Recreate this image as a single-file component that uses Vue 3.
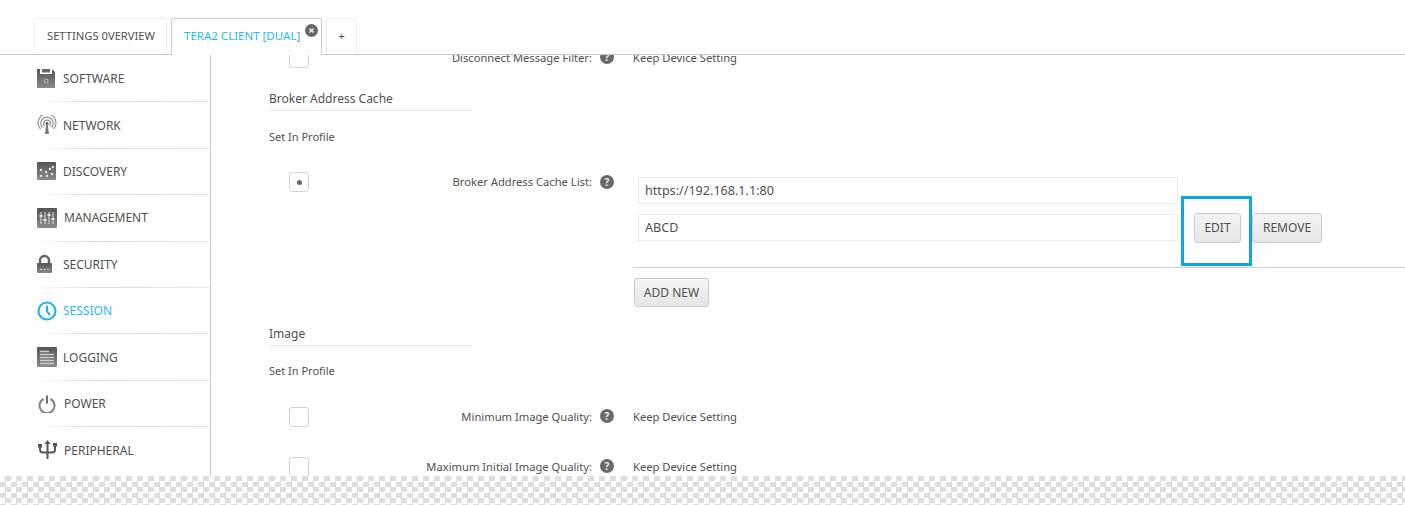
<template>
  <div class="page">
    <div class="tabs">
      <div class="tab tab-first">SETTINGS 0VERVIEW</div>
      <div class="tab tab-active">
        TERA2 CLIENT [DUAL]
        <span class="tab-close">
          <svg viewBox="0 0 13 13" width="13" height="13">
            <circle cx="6.500" cy="6.500" r="6.500" fill="#666" />
            <path d="M4.500 4.500l4 4M8.500 4.500l-4 4" stroke="#e8e8e8" stroke-width="1.700" />
          </svg>
        </span>
      </div>
      <div class="tab tab-plus">+</div>
    </div>

    <div class="main">
      <nav class="sidebar">
        <div
          v-for="item in menu"
          :key="item.name"
          class="menu-item"
          :class="{ current: item.name === 'SESSION', shifted: item.shifted }"
        >
          <svg class="menu-icon" viewBox="0 0 20 20" width="20" height="20">
            <defs>
              <linearGradient :id="'grey-' + item.name" x1="0" y1="0" x2="0" y2="1">
                <stop offset="0" stop-color="#555" />
                <stop offset="1" stop-color="#8a8a8a" />
              </linearGradient>
            </defs>
            <template v-if="item.name === 'SOFTWARE'">
              <path d="M0 0h3v5h12V0l3 3v16H0z" :fill="'url(#grey-' + item.name + ')'" />
              <rect x="5" y="0" width="8" height="3.500" fill="#666" />
              <circle cx="9" cy="12" r="2" fill="none" stroke="#bbb" />
            </template>
            <template v-else-if="item.name === 'NETWORK'">
              <g fill="none" stroke="#999" stroke-width="1.300">
                <path d="M3.500 14a9 9 0 1 1 13 0" />
                <path d="M5.500 12.500a6.200 6.200 0 1 1 9 0" />
                <path d="M7.600 11a3.400 3.400 0 1 1 4.800 0" />
              </g>
              <circle cx="10" cy="8.500" r="1.600" fill="#666" />
              <path d="M9.400 9h1.200l1.400 10H8z" fill="#777" />
            </template>
            <template v-else-if="item.name === 'DISCOVERY'">
              <rect x="0" y="1" width="19" height="18" rx="1" :fill="'url(#grey-' + item.name + ')'" />
              <g fill="#ddd">
                <circle cx="4" cy="9" r="1.300" />
                <circle cx="9" cy="11" r="1.300" />
                <circle cx="4" cy="15" r="1.300" />
                <circle cx="13" cy="8" r="1.300" />
                <circle cx="16" cy="6" r="1.300" />
                <circle cx="10" cy="15" r="1.300" />
                <circle cx="15" cy="13" r="1.300" />
              </g>
            </template>
            <template v-else-if="item.name === 'MANAGEMENT'">
              <rect x="0" y="0" width="20" height="20" rx="1" :fill="'url(#grey-' + item.name + ')'" />
              <g stroke="#e4e4e4" stroke-width="1">
                <path d="M4 4v12M8 4v12M12 4v12M16 4v12" />
                <path d="M2.500 8h3M6.500 12h3M10.500 7h3M14.500 11h3" stroke-width="2" />
              </g>
            </template>
            <template v-else-if="item.name === 'SECURITY'">
              <path d="M3 9V6.500a4.500 4.500 0 0 1 9 0V9" fill="none" stroke="#666" stroke-width="2.400" />
              <rect x="0" y="9" width="15" height="10" rx="1" :fill="'url(#grey-' + item.name + ')'" />
              <path d="M3 15.500h2M6.500 15.500h2M10 15.500h2" stroke="#ddd" />
            </template>
            <template v-else-if="item.name === 'SESSION'">
              <circle cx="10" cy="10" r="8.500" fill="none" stroke="#27b5e8" stroke-width="2.200" />
              <path d="M10 4.500V10.500L13 14" fill="none" stroke="#27b5e8" stroke-width="2" />
            </template>
            <template v-else-if="item.name === 'LOGGING'">
              <rect x="0" y="0" width="20" height="20" rx="1" :fill="'url(#grey-' + item.name + ')'" />
              <path d="M3 4.500h9M3 7.500h14M3 10.500h14M3 13.500h14M3 16.500h14" stroke="#ccc" stroke-width="1.300" />
            </template>
            <template v-else-if="item.name === 'POWER'">
              <path d="M6.500 6a7.500 7.500 0 1 0 7 0" fill="none" stroke="#808080" stroke-width="2" />
              <path d="M10 2.500v8" stroke="#707070" stroke-width="2" />
            </template>
            <template v-else>
              <path d="M10.500 0l3 4h-2v15h-2V4h-2z" fill="#555" />
              <path d="M3 7v2.500q0 3 3 3h4.500M18 6v3.500q0 3-3 3h-4.500" fill="none" stroke="#555" stroke-width="2" />
              <rect x="1" y="4" width="4" height="3.500" fill="#555" />
              <rect x="16" y="3" width="4" height="3.500" fill="#555" />
            </template>
          </svg>
          <span>{{ item.name }}</span>
        </div>
      </nav>

      <section class="content">
        <div class="row row-clipped">
          <span class="check"></span>
          <span class="label">Disconnect Message Filter:</span>
          <span class="help">?</span>
          <span class="value">Keep Device Setting</span>
        </div>

        <h3 class="heading heading-broker">Broker Address Cache</h3>
        <p class="profile profile-broker">Set In Profile</p>

        <div class="row row-list">
          <span class="check"><i class="dot"></i></span>
          <span class="label">Broker Address Cache List:</span>
          <span class="help">?</span>
          <div class="cache-list">
            <div class="cache-line">
              <div class="field">https://192.168.1.1:80</div>
            </div>
            <div class="cache-line">
              <div class="field">ABCD</div>
              <button class="btn btn-edit">EDIT</button>
              <button class="btn btn-remove">REMOVE</button>
            </div>
            <div class="cache-foot">
              <button class="btn btn-add">ADD NEW</button>
            </div>
            <div class="highlight"></div>
          </div>
        </div>

        <h3 class="heading heading-image">Image</h3>
        <p class="profile">Set In Profile</p>

        <div class="row row-min">
          <span class="check"></span>
          <span class="label">Minimum Image Quality:</span>
          <span class="help">?</span>
          <span class="value">Keep Device Setting</span>
        </div>
        <div class="row row-max">
          <span class="check"></span>
          <span class="label">Maximum Initial Image Quality:</span>
          <span class="help">?</span>
          <span class="value">Keep Device Setting</span>
        </div>
      </section>
    </div>

    <div class="checker"></div>
  </div>
</template>

<script setup>
const menu = [
  { name: "SOFTWARE" },
  { name: "NETWORK" },
  { name: "DISCOVERY" },
  { name: "MANAGEMENT", shifted: true },
  { name: "SECURITY" },
  { name: "SESSION" },
  { name: "LOGGING" },
  { name: "POWER", shifted: true },
  { name: "PERIPHERAL", shifted: true },
];
</script>

<style>
html,
body {
  margin: 0;
  background: #fff;
}
</style>

<style scoped>
.page {
  width: 1405px;
  height: 505px;
  overflow: hidden;
  display: flex;
  flex-direction: column;
  background: #fff;
  color: #505050;
  font-family: "Noto Sans", sans-serif;
  font-size: 12px;
}

.tabs {
  display: flex;
  align-items: flex-end;
  gap: 4px;
  height: 55px;
  flex: none;
  padding-left: 34px;
  box-sizing: border-box;
  border-bottom: 1px solid #c8c8c8;
}

.tab {
  height: 36px;
  padding: 0 0 3px;
  display: flex;
  align-items: center;
  box-sizing: border-box;
  border: 1px solid #eee;
  border-bottom: none;
  border-radius: 3px 3px 0 0;
  white-space: nowrap;
  font-size: 11.5px;
}

.tab-first {
  width: 133px;
  padding-left: 12px;
  font-size: 11.2px;
}

.tab-active {
  position: relative;
  height: 37px;
  margin-bottom: -1px;
  width: 151px;
  padding-left: 12px;
  background: #fff;
  color: #27b9ee;
  border: 1px solid #ccc;
  border-bottom: none;
}

.tab-close {
  position: absolute;
  top: 5px;
  right: 3px;
  height: 13px;
}

.tab-plus {
  width: 31px;
  justify-content: center;
}

.main {
  flex: 1;
  min-height: 0;
  display: flex;
}

.sidebar {
  width: 177px;
  flex: none;
  margin-left: 34px;
  padding-top: 1px;
  box-sizing: border-box;
  border-right: 1px solid #c8c8c8;
}

.menu-item {
  height: 46.4px;
  box-sizing: border-box;
  padding-left: 3px;
  display: flex;
  align-items: center;
  gap: 6px;
  border-bottom: 1px solid;
  border-image: linear-gradient(to right, #fff, #dcdcdc 35%, #e8e8e8) 1;
  font-size: 12px;
}

.menu-item:last-child {
  border-bottom: none;
}

.menu-item.shifted {
  gap: 7px;
}

.menu-item.current {
  color: #27b9ee;
}

.menu-icon {
  flex: none;
}

.content {
  flex: 1;
  min-width: 0;
  overflow: hidden;
  padding-left: 58px;
}

.row {
  display: flex;
  align-items: center;
  height: 20px;
  font-size: 11.2px;
}

.row-clipped {
  margin-top: -8px;
}

.check {
  width: 20px;
  height: 20px;
  margin: 2px 0 0 20px;
  flex: none;
  box-sizing: border-box;
  display: flex;
  align-items: center;
  justify-content: center;
  border: 1px solid #d4d4d4;
  border-radius: 3px;
}

.dot {
  width: 5px;
  height: 5px;
  border-radius: 50%;
  background: #666;
}

.label {
  width: 283px;
  flex: none;
  text-align: right;
  white-space: nowrap;
}

.help {
  width: 14px;
  height: 14px;
  flex: none;
  margin-left: 8px;
  border-radius: 50%;
  background: #6a6a6a;
  color: #eee;
  font-size: 10px;
  font-weight: 700;
  line-height: 14px;
  text-align: center;
}

.value {
  margin-left: 19px;
  white-space: nowrap;
}

.heading {
  margin: 0;
  width: 202px;
  font-size: 12px;
  font-weight: 400;
  line-height: 17px;
  padding-bottom: 3px;
  box-sizing: border-box;
  border-bottom: 1px solid #e8e8e8;
}

.heading-broker {
  margin-top: 23px;
}

.heading-image {
  margin-top: 18px;
}

.profile {
  margin: 17px 0 0;
  font-size: 11px;
  line-height: 16px;
}

.profile-broker {
  margin-top: 18px;
}

.row-list {
  align-items: flex-start;
  height: auto;
  margin-top: 27px;
}

.row-list .check {
  margin-top: 0;
}

.row-list .help {
  margin-top: 3px;
}

.row-list .label {
  line-height: 20px;
}

.cache-list {
  position: relative;
  flex: 1;
  margin-left: 19px;
  margin-top: 5px;
}

.cache-line {
  display: flex;
  align-items: center;
  height: 27px;
  padding-left: 5px;
  margin-bottom: 10px;
}

.field {
  width: 540px;
  height: 27px;
  flex: none;
  box-sizing: border-box;
  padding-left: 6px;
  border: 1px solid #ececec;
  font-size: 12.6px;
  line-height: 25px;
}

.btn {
  height: 30px;
  box-sizing: border-box;
  padding: 0;
  border: 1px solid #ccc;
  border-radius: 3px;
  background: linear-gradient(#f4f4f4, #e6e6e6);
  color: #505050;
  font-family: inherit;
  font-size: 12px;
}

.btn-edit {
  width: 47px;
  margin-left: 16px;
}

.btn-remove {
  width: 70px;
  margin-left: 11px;
}

.cache-foot {
  margin-top: 26px;
  padding-top: 10px;
  border-top: 1px solid #d0d0d0;
}

.btn-add {
  width: 75px;
  height: 29px;
  margin-left: 1px;
}

.highlight {
  position: absolute;
  left: 548px;
  top: 19px;
  width: 71px;
  height: 70px;
  box-sizing: border-box;
  border: 3px solid #0ea7e4;
  pointer-events: none;
}

.row-min {
  margin-top: 27px;
}

.row-max {
  margin-top: 30px;
}

.checker {
  flex: none;
  height: 29px;
  background: repeating-conic-gradient(#dedede 0 25%, #fff 0 50%) 0 0 / 11px 11px;
}
</style>
